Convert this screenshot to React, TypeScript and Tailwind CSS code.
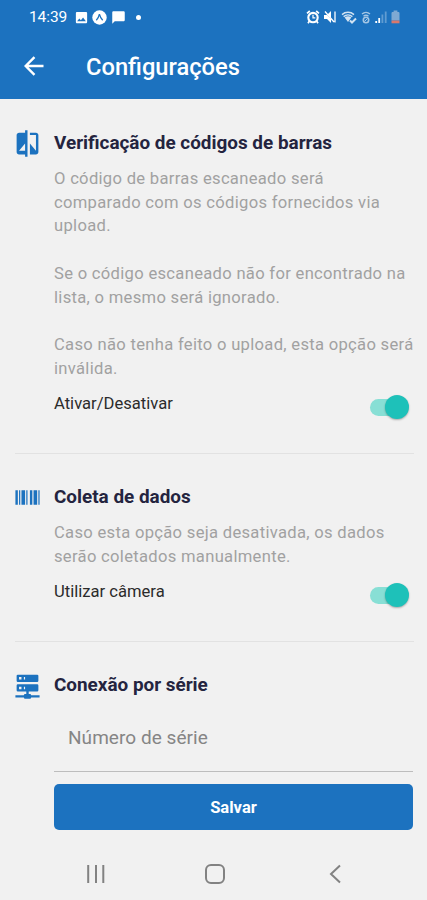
import type { ReactNode } from 'react';
import { MdChatBubble, MdImage } from 'react-icons/md';

const COMPARE =
  'M10 3H5c-1.1 0-2 .9-2 2v14c0 1.1.9 2 2 2h5v2h2V1h-2v2zm0 15H5l5-6v6zm9-15h-5v2h5v13l-5-6v9h5c1.1 0 2-.9 2-2V5c0-1.1-.9-2-2-2z';
const BARCODE =
  'M2 6H4V18H2V6M5 6H6V18H5V6M7 6H10V18H7V6M11 6H12V18H11V6M14 6H16V18H14V6M17 6H20V18H17V6M21 6H22V18H21V6Z';
const SERVER =
  'M13 19h1a1 1 0 0 1 1 1h7v2h-7a1 1 0 0 1-1 1h-4a1 1 0 0 1-1-1H2v-2h7a1 1 0 0 1 1-1h1v-2H4a1 1 0 0 1-1-1v-4a1 1 0 0 1 1-1h16a1 1 0 0 1 1 1v4a1 1 0 0 1-1 1h-7v2M4 3h16a1 1 0 0 1 1 1v4a1 1 0 0 1-1 1H4a1 1 0 0 1-1-1V4a1 1 0 0 1 1-1m5 4h1V5H9v2m0 8h1v-2H9v2M5 5v2h2V5H5m0 8v2h2v-2H5z';

const StatusBar = () => (
  <div className="flex h-[34px] items-center pl-[29px] pr-[27px] text-white">
    <span className="w-[45px] pt-px text-[15.5px] leading-none tracking-[-0.1px]">14:39</span>
    <MdImage className="h-[15px] w-[15px]" />
    <svg className="ml-[3px] h-[15px] w-[15px]" viewBox="0 0 15 15">
      <circle cx="7.5" cy="7.5" r="7.2" fill="currentColor" />
      <path d="M4.3 10.3Q6.6 8 7.4 4.2 8.4 8 10.7 10.3" fill="none" stroke="#1c72bf" strokeWidth="1.3" />
    </svg>
    <MdChatBubble className="ml-[4px] h-[15px] w-[15px]" />
    <span className="ml-[10px] h-[5px] w-[5px] rounded-full bg-white" />

    <div className="ml-auto flex items-center">
      <svg className="h-[14px] w-[14px]" viewBox="0 0 14 14">
        <circle cx="7" cy="7.6" r="4.7" fill="none" stroke="currentColor" strokeWidth="2.1" />
        <path d="M1 3.4 3.8 1M13 3.4 10.2 1M3.3 11.3 2 13.2M10.7 11.3 12 13.2" stroke="currentColor" strokeWidth="1.7" />
        <path d="M7 4.8v3h2.3" fill="none" stroke="currentColor" strokeWidth="1.2" />
      </svg>
      <svg className="ml-[3px] h-[14px] w-[14px]" viewBox="0 0 14 14">
        <path d="M1 5h3l4-4v12L4 9H1z" fill="currentColor" />
        <path d="M1 1l11 12" stroke="#1c72bf" strokeWidth="1" />
        <path d="M2 1.5l9 10.5M12 1.5v11" stroke="currentColor" strokeWidth="1.3" />
      </svg>
      <svg className="ml-[4px] h-[14px] w-[16px]" viewBox="0 0 16 14" opacity="0.8">
        <path d="M7 12 3.6 7.6a5.2 5.2 0 0 1 6.8 0z" fill="currentColor" />
        <path d="M1 4.6a9.2 9.2 0 0 1 12 0M2.6 6.6a6.8 6.8 0 0 1 8.8 0" fill="none" stroke="currentColor" strokeWidth="1.5" />
        <path d="M9 10.5l2 2 4-4" fill="none" stroke="currentColor" strokeWidth="2" />
      </svg>
      <svg className="ml-[4px] h-[14px] w-[10px]" viewBox="0 0 10 14" opacity="0.6">
        <path d="M1 4a6 6 0 0 1 8 0M2.5 6.3a4 4 0 0 1 5 0" fill="none" stroke="currentColor" strokeWidth="1.4" />
        <circle cx="5" cy="10" r="2.7" fill="none" stroke="currentColor" strokeWidth="1.6" />
        <path d="M3.5 11.5 6.5 8.5" stroke="currentColor" />
      </svg>
      <svg className="ml-[4px] h-[14px] w-[12px]" viewBox="0 0 12 14" fill="currentColor">
        <path d="M.3 11h1.8v2H.3zM3.3 8h1.8v5H3.3z" />
        <path d="M6.5 4.5h1.8v8.5H6.5zM9.8 1.5h1.8v11.5H9.8z" opacity="0.3" />
      </svg>
      <svg className="ml-[4px] h-[14px] w-[9px]" viewBox="0 0 9 14">
        <path d="M2.6.5h3.8V2h1.4l.7.7V10.5H.5V2.7L1.2 2h1.4z" fill="#7fa9d3" />
        <path d="M.5 10.5h8v2.8h-8z" fill="#d8786c" />
      </svg>
    </div>
  </div>
);

const Toggle = () => (
  <span className="relative mr-[4px] mt-[2px] h-[25px] w-[39px]">
    <span className="absolute left-0 top-[4px] h-[17px] w-[36px] rounded-full bg-[#88dfd5]" />
    <span className="absolute right-0 top-0 h-[24px] w-[24px] rounded-full bg-[#1ec1b9] shadow-[0_1px_2px_rgba(0,0,0,0.3)]" />
  </span>
);

type SectionProps = { icon: string; title: string; className: string; children: ReactNode };

const Section = ({ icon, title, className, children }: SectionProps) => (
  <section className={`flex ${className}`}>
    <svg className="mt-[12px] h-[29px] w-[29px] shrink-0" viewBox="0 0 24 24" fill="#1c72bf">
      <path d={icon} />
    </svg>
    <div className="ml-[12px] min-w-0 flex-1 pt-[14px]">
      <h2 className="whitespace-nowrap text-[18.9px] font-bold leading-[24px] text-[#24243f]">{title}</h2>
      {children}
    </div>
  </section>
);

const Option = ({ label }: { label: string }) => (
  <div className="flex justify-between">
    <span className="text-[16.6px] leading-[22px] text-[#2b2b2b]">{label}</span>
    <Toggle />
  </div>
);

const App = () => (
  <div className="flex h-[900px] w-[427px] flex-col overflow-hidden bg-[#f1f1f1] font-['Roboto','Liberation_Sans',sans-serif]">
    <header className="h-[99px] shrink-0 bg-[#1c72bf] text-white">
      <StatusBar />
      <div className="flex h-[64px] items-center pl-[24px]">
        <svg className="h-[20px] w-[20px]" viewBox="0 0 20 20" fill="none" stroke="currentColor" strokeWidth="2.4">
          <path d="M19.5 10H2M10.5 1.2 1.7 10l8.8 8.8" />
        </svg>
        <h1 className="ml-[42px] pt-[2px] text-[23.7px] font-medium leading-[30px]">Configurações</h1>
      </div>
    </header>

    <main className="flex flex-1 flex-col pl-[13px] pr-[14px]">
      <Section icon={COMPARE} title="Verificação de códigos de barras" className="h-[354px] pt-[18px]">
        <p className="mb-[13px] mt-[12px] whitespace-pre text-[16.6px] leading-[23.7px] tracking-[0.3px] text-[#a1a1a1]">
          {`O código de barras escaneado será
comparado com os códigos fornecidos via
upload.

Se o código escaneado não for encontrado na
lista, o mesmo será ignorado.

Caso não tenha feito o upload, esta opção será
inválida.`}
        </p>
        <Option label="Ativar/Desativar" />
      </Section>
      <hr className="-mr-px ml-[2px] border-[#e2e2e2]" />

      <Section icon={BARCODE} title="Coleta de dados" className="h-[187px] pt-[17px]">
        <p className="mb-[13px] mt-[12px] whitespace-pre text-[16.6px] leading-[23.7px] tracking-[0.3px] text-[#a1a1a1]">
          {`Caso esta opção seja desativada, os dados
serão coletados manualmente.`}
        </p>
        <Option label="Utilizar câmera" />
      </Section>
      <hr className="-mr-px ml-[2px] border-[#e2e2e2]" />

      <Section icon={SERVER} title="Conexão por série" className="pt-[17px]">
        <input
          className="mt-[6px] block h-[69px] w-full border-b border-[#bdbdbd] px-[14px] text-[19px] tracking-[0.05px] outline-none placeholder:text-[#858585]"
          placeholder="Número de série"
        />
        <button className="mt-[12px] block h-[46px] w-full rounded-[5px] bg-[#1c72bf] pt-[2px] text-[16.6px] font-bold text-white">
          Salvar
        </button>
      </Section>
    </main>

    <nav className="flex h-[52px] shrink-0 items-center pl-[86px] text-[#828282]">
      <svg className="h-[20px] w-[20px]" viewBox="0 0 20 20" stroke="currentColor" strokeWidth="2">
        <path d="M2.2 1v18M10 1v18M17.3 1v18" />
      </svg>
      <span className="ml-[99px] h-[20px] w-[20px] rounded-[6px] border-2 border-current" />
      <svg className="ml-[103px] h-[20px] w-[14px]" viewBox="0 0 14 20" fill="none" stroke="currentColor" strokeWidth="2">
        <path d="M12 1.5 3 10l9 8.5" />
      </svg>
    </nav>
  </div>
);

export default App;
